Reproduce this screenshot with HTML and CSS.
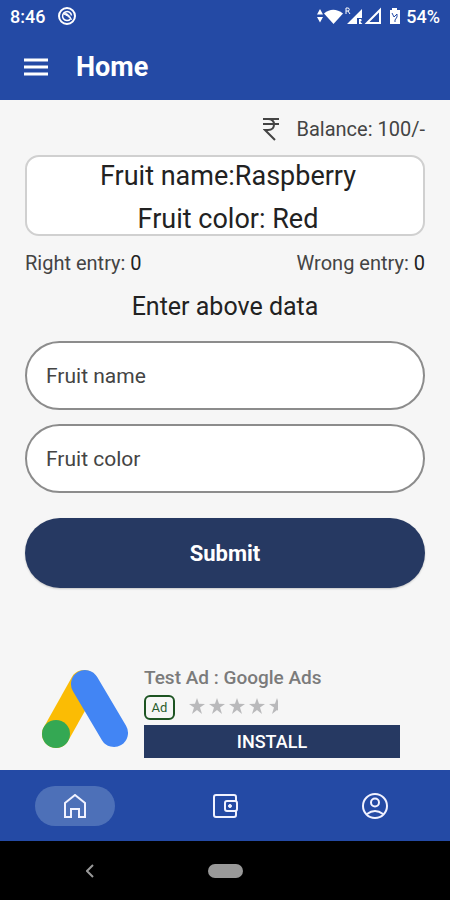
FILE: index.html
```html
<!DOCTYPE html>
<html lang="en">
<head>
<meta charset="utf-8">
<meta name="viewport" content="width=device-width, initial-scale=1">
<title>Home</title>
<link rel="stylesheet" href="styles.css">
</head>
<body>
<div class="status">
  <span>8:46</span>
  <svg class="status-app" width="18" height="18" viewBox="0 0 18 18" fill="none" stroke="currentColor" stroke-width="2"><circle cx="9" cy="9" r="8"/><path d="M12.500 12A4.500 4.500 0 1 1 13.500 8.500" stroke-width="1.500"/><path d="M6 7q4-2 7.500 5.500Q9 8 6 7z" fill="currentColor" stroke-width="1"/></svg>
  <svg class="status-signals" width="86" height="20" viewBox="0 0 86 20" fill="currentColor">
    <path d="M1 8.500 4 3l3 5.500zM1 11h6l-3 5.500z"/>
    <path d="M8 7.500Q17 0 27 7.500L17.500 18z"/>
    <path d="M30 8V2h2.500q1.500 1.500 0 3H30m2 0 2 3" fill="none" stroke="currentColor"/>
    <path d="M31 18 46 3v9h-5v6zM43 18v-5h2q1.500 1.300 0 2.500h-1l2.500 2.500z"/>
    <path d="M51 17 64 4v13z" fill="none" stroke="currentColor" stroke-width="2"/>
    <path d="M74 4h2V2h5v2h3v14H74z"/>
    <path d="m76 7 2 4 3-3v3l-2 3v2" fill="none" stroke="#244aa5" stroke-width="1"/>
  </svg>
  <span>54%</span>
</div>
<header class="appbar">
  <button class="menu" type="button" aria-label="Menu"><svg width="24" height="18" viewBox="0 0 24 18"><path d="M0 2h24M0 9h24M0 16h24" stroke="currentColor" stroke-width="3"/></svg></button>
  <h1>Home</h1>
</header>
<main>
  <p class="balance"><svg width="16" height="24" viewBox="0 0 16 24" fill="none" stroke="currentColor" stroke-width="2"><path d="M0 2h16M0 7h16M1 2h4q6 0 6 5.500t-6 5.500H2l10 10"/></svg><span>Balance: 100/-</span></p>
  <section class="prompt"><p>Fruit name:Raspberry</p><p>Fruit color: Red</p></section>
  <div class="scores"><span>Right entry: <b>0</b></span><span>Wrong entry: <b>0</b></span></div>
  <form>
    <h2>Enter above data</h2>
    <input type="text" placeholder="Fruit name" aria-label="Fruit name">
    <input type="text" placeholder="Fruit color" aria-label="Fruit color">
    <button class="submit" type="submit">Submit</button>
  </form>
  <aside class="ad">
    <svg class="ad-logo" width="88" height="80" viewBox="0 0 88 80" fill="none" stroke-linecap="round" stroke-width="28"><path d="M15 65 43 15" stroke="#fbbc04"/><path d="M44 15 73 64" stroke="#4285f4"/><circle cx="15" cy="65" r="14" fill="#34a853"/></svg>
    <div class="ad-body">
      <p class="ad-title">Test Ad : Google Ads</p>
      <div class="ad-meta"><span class="badge">Ad</span>
        <svg width="96" height="16" viewBox="0 0 96 16" fill="#b9b9bb"><defs><path id="star" d="m8 0 2 5.800 6 .2-5 3.500 2 6.500-5-4-5 4 2-6.500L0 6l6-.2z"/><clipPath id="half"><path d="M80 0h9v16h-9z"/></clipPath></defs><use href="#star"/><use href="#star" x="20"/><use href="#star" x="40"/><use href="#star" x="60"/><g clip-path="url(#half)"><use href="#star" x="80"/></g></svg>
      </div>
      <button class="install" type="button">INSTALL</button>
    </div>
  </aside>
</main>
<nav class="tabs">
  <a class="active" href="#home" aria-label="Home"><svg width="22" height="24" viewBox="0 0 22 24" fill="none" stroke="currentColor" stroke-width="2"><path d="M1 9 11 1l10 8v14h-6v-8H7v8H1z"/></svg></a>
  <a href="#wallet" aria-label="Wallet"><svg width="26" height="26" viewBox="0 0 26 26" fill="none" stroke="currentColor" stroke-width="2"><path d="M24 8V4q0-2-2-2H4Q2 2 2 4v18q0 2 2 2h18q2 0 2-2v-4"/><rect x="13" y="8" width="12" height="10" rx="2"/><circle cx="18" cy="13" r="1.500" fill="currentColor" stroke-width="1"/></svg></a>
  <a href="#account" aria-label="Account"><svg width="26" height="26" viewBox="0 0 26 26" fill="none" stroke="currentColor" stroke-width="2"><circle cx="13" cy="13" r="12"/><circle cx="13" cy="9.500" r="4"/><path d="M5 21q8-6 16 0"/></svg></a>
</nav>
<div class="system">
  <button type="button" aria-label="Back"><svg width="8" height="14" viewBox="0 0 8 14" fill="none" stroke="currentColor" stroke-width="2"><path d="M7 1 1 7l6 6"/></svg></button>
  <button class="pill" type="button" aria-label="System home"></button>
</div>
</body>
</html>
```

FILE: styles.css
```css
* { box-sizing: border-box; }
body {
  display: flex;
  flex-direction: column;
  min-height: 100vh;
  margin: 0;
  background: #f6f6f6;
  color: #222;
  font-family: Roboto, sans-serif;
}
h1, h2, p { margin: 0; }
svg { display: block; flex: none; }
button { padding: 0; border: 0; background: none; color: inherit; font-family: inherit; cursor: pointer; }

.status {
  display: flex;
  align-items: center;
  height: 32px;
  padding: 0 10px;
  background: #244aa5;
  color: #fff;
  font-size: 18px;
  font-weight: 500;
}
.status-app { margin-left: 13px; }
.status-signals { margin-left: auto; margin-right: 4px; }

.appbar {
  display: flex;
  align-items: center;
  gap: 28px;
  height: 68px;
  padding: 2px 24px 0;
  background: #244aa5;
  color: #fff;
}
.appbar h1 { font-size: 27px; font-weight: 700; line-height: 32px; }

main { display: flex; flex: 1; flex-direction: column; padding: 15px 25px 12px; }
.balance {
  display: flex;
  align-items: center;
  justify-content: flex-end;
  gap: 17px;
  color: #444;
  font-size: 20px;
  line-height: 28px;
}
.prompt {
  display: grid;
  gap: 13px;
  margin-top: 12px;
  padding: 4px 0 0 6px;
  border: 2px solid #d0d0d0;
  border-radius: 14px;
  background: #fff;
  font-size: 27px;
  line-height: 30px;
  text-align: center;
}
.scores {
  display: flex;
  justify-content: space-between;
  margin-top: 13px;
  color: #444;
  font-size: 20px;
  line-height: 28px;
}
.scores b { color: #222; font-weight: 400; }

form { display: flex; flex-direction: column; gap: 14px; }
form h2 {
  margin-top: 12px;
  margin-bottom: 2px;
  font-size: 25px;
  font-weight: 400;
  line-height: 36px;
  text-align: center;
}
input {
  width: 100%;
  height: 69px;
  padding: 0 19px;
  border: 2px solid #8c8c8c;
  border-radius: 35px;
  background: #fff;
  color: #222;
  font: 400 21px Roboto, sans-serif;
}
input::placeholder { color: #444; opacity: 1; }
.submit {
  height: 70px;
  margin-top: 11px;
  border-radius: 35px;
  background: #263962;
  box-shadow: 0 1px 2px #0003;
  color: #fff;
  font-size: 22px;
  font-weight: 700;
}

.ad { display: flex; gap: 15px; margin-top: auto; padding: 0 25px 0 16px; }
.ad-logo { margin-top: 3px; }
.ad-body { flex: 1; }
.ad-title { color: #7b7b7b; font-size: 19px; font-weight: 500; line-height: 24px; }
.ad-meta { display: flex; align-items: center; gap: 14px; margin: 5px 0; }
.badge {
  width: 31px;
  border: 2px solid #1d5422;
  border-radius: 6px;
  color: #285c2c;
  font-size: 13px;
  line-height: 21px;
  text-align: center;
}
.ad-meta svg { margin-bottom: 4px; }
.install {
  display: block;
  width: 100%;
  height: 33px;
  background: #263962;
  color: #fff;
  font-size: 18px;
  font-weight: 500;
}

.tabs {
  display: grid;
  grid-template-columns: repeat(3, 1fr);
  place-items: center;
  height: 71px;
  background: #244aa5;
}
.tabs a { display: grid; place-items: center; width: 80px; height: 40px; border-radius: 20px; color: #f1f2ff; }
.tabs .active { background: #4d70b8; }
.system {
  display: grid;
  grid-template-columns: repeat(5, 1fr);
  place-items: center;
  height: 59px;
  background: #000;
  color: #999;
}
.system button:first-child { grid-column: 1 / 3; }
.system .pill { grid-column: 3; width: 35px; height: 14px; border-radius: 7px; background: #999; }
```
